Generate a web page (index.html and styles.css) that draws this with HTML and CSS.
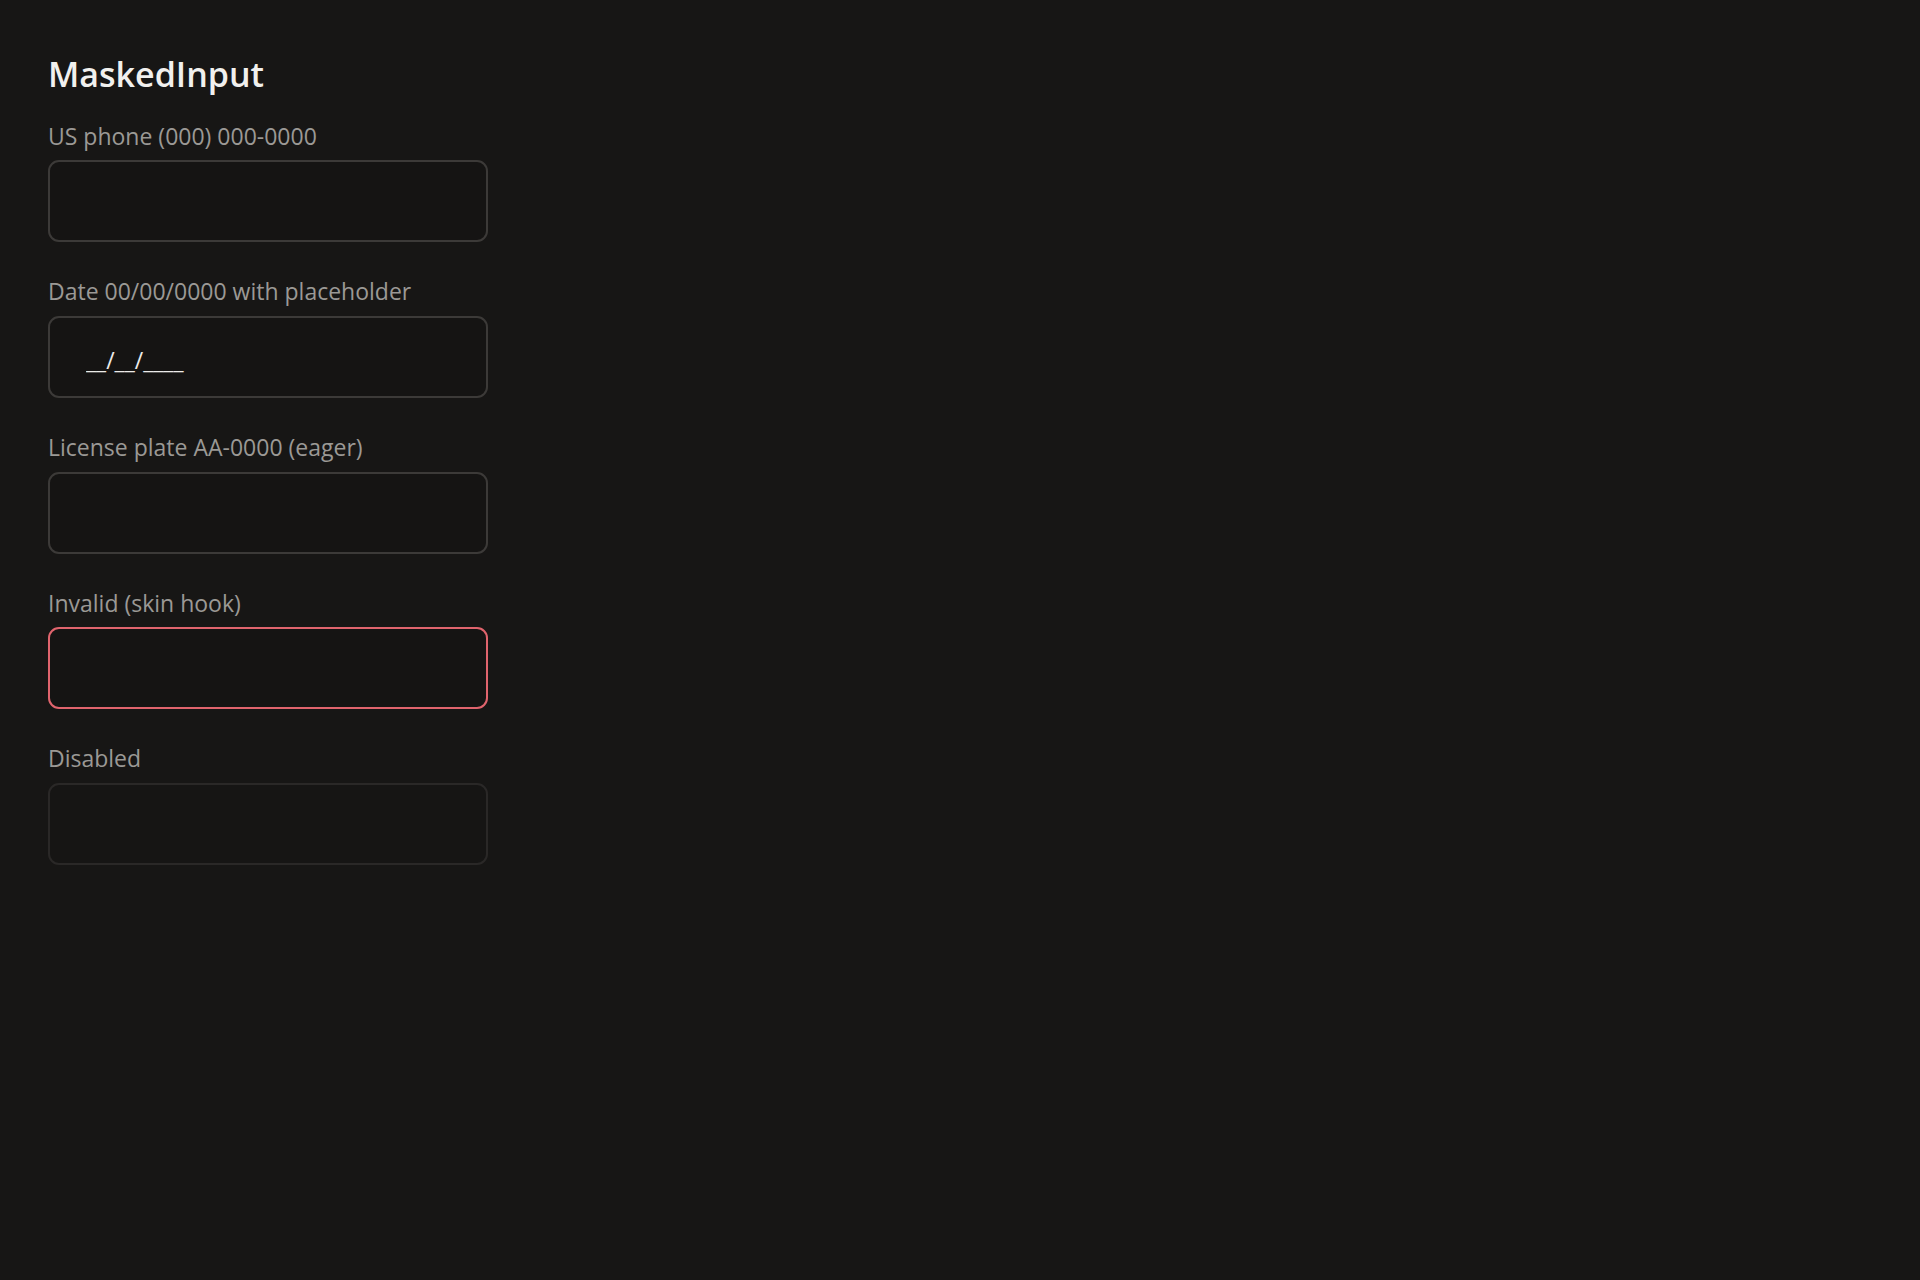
FILE: index.html
```html
<!DOCTYPE html>
<html lang="en">
<head>
    <meta charset="UTF-8">
    <meta name="viewport" content="width=device-width, initial-scale=1.0">
    <title>MaskedInput</title>
    <link rel="stylesheet" href="styles.css">
</head>
<body>
    <div class="page">
        <h1>MaskedInput</h1>

        <!-- Fields -->
        <div class="fields">
            <div class="field">
                <label for="phone">US phone (000) 000-0000</label>
                <input type="text" id="phone" class="masked">
            </div>
            <div class="field">
                <label for="date">Date 00/00/0000 with placeholder</label>
                <input type="text" id="date" class="masked" value="__/__/____">
            </div>
            <div class="field">
                <label for="plate">License plate AA-0000 (eager)</label>
                <input type="text" id="plate" class="masked">
            </div>
            <div class="field">
                <label for="invalid">Invalid (skin hook)</label>
                <input type="text" id="invalid" class="masked invalid">
            </div>
            <div class="field">
                <label for="disabled">Disabled</label>
                <input type="text" id="disabled" class="masked" disabled>
            </div>
        </div>
    </div>
</body>
</html>
```

FILE: styles.css
```css
body {
    margin: 0;
    background-color: #171615;
    font-family: "Open Sans", "Noto Sans", sans-serif;
    color: #efeeec;
}

.page {
    padding: 54px 48px;
}

h1 {
    margin: 0 0 28px 0;
    font-size: 34px;
    font-weight: 600;
    line-height: 1.2;
    color: #f1f0ee;
}

.fields {
    display: flex;
    flex-direction: column;
    gap: 36px;
}

.field {
    display: flex;
    flex-direction: column;
    gap: 10px;
}

.field label {
    font-size: 23px;
    line-height: 1.2;
    color: #9b9995;
}

.masked {
    box-sizing: border-box;
    width: 440px;
    height: 82px;
    padding: 6px 36px 0 36px;
    border: 2px solid #3c3a38;
    border-radius: 11px;
    background-color: #151413;
    color: #ecebe9;
    font-family: inherit;
    font-size: 23px;
    outline: none;
}

.masked.invalid {
    border-color: #e0646d;
}

.masked:disabled {
    border-color: #2a2827;
    background-color: #161514;
}
```
